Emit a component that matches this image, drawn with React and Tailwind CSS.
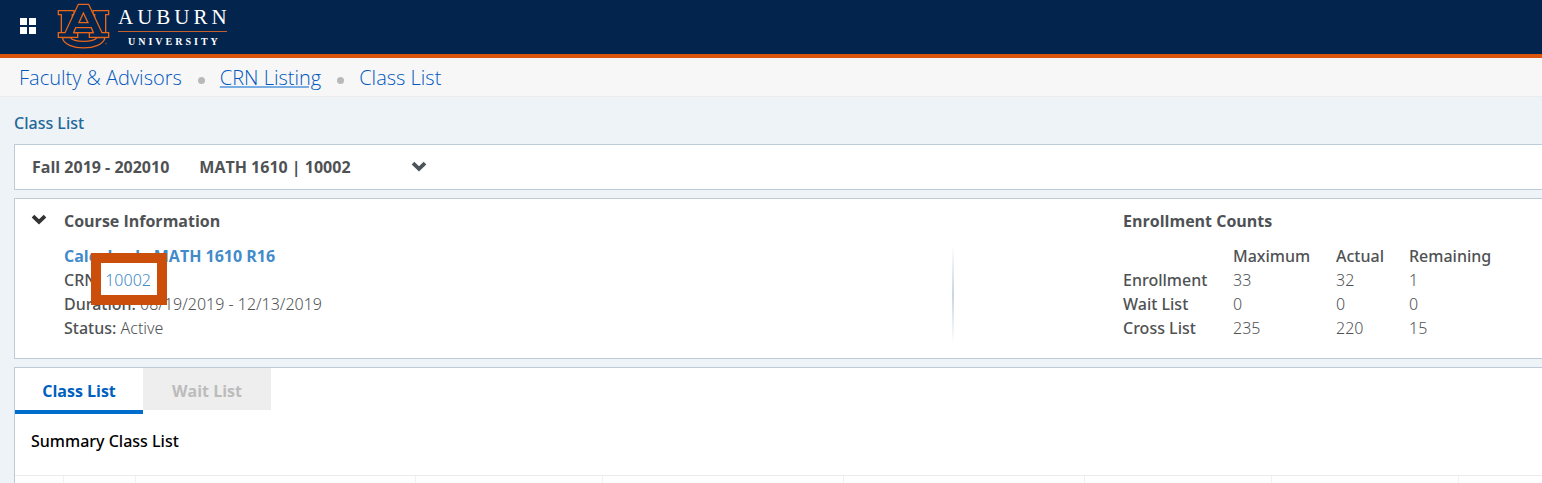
import { useState } from 'react';
import clsx from 'clsx';

const enrollment = [
  { label: 'Enrollment', maximum: 33, actual: 32, remaining: 1 },
  { label: 'Wait List', maximum: 0, actual: 0, remaining: 0 },
  { label: 'Cross List', maximum: 235, actual: 220, remaining: 15 },
];

const columnWidths = [
  'w-12',
  'w-[72px]',
  'w-[280px]',
  'w-[187px]',
  'w-[241px]',
  'w-[241px]',
  'w-[187px]',
  'w-[187px]',
];

function Chevron({ className }) {
  return (
    <svg viewBox="0 0 16 11" className={clsx('w-4 h-[11px]', className)}>
      <path
        d="M2 2.2 L8 7.8 L14 2.2"
        fill="none"
        stroke="currentColor"
        strokeWidth="3.8"
      />
    </svg>
  );
}

function AuburnMark() {
  return (
    <svg
      viewBox="171 8 159 141"
      className="w-[53px] h-[47px]"
      fill="#03244d"
      stroke="#e8651a"
      strokeWidth="4"
      strokeLinejoin="miter"
    >
      <path d="M187 112 C194 153 308 153 315 112 L291 112 C280 127 222 127 211 112 Z" />
      <path d="M175 31 H222 V43 H217 V97 H184 V43 H175 Z" />
      <path d="M326 31 H279 V43 H284 V97 H317 V43 H326 Z" />
      <path d="M235 12 H266 L306 97 H326 V111 H268 V97 H280 L274 82 H227 L221 97 H233 V111 H175 V97 H195 Z" />
      <path d="M221 97 H280" />
      <path d="M250 38 L264 67 H237 Z" />
      <circle cx="318" cy="130" r="1.5" strokeWidth="1.5" />
    </svg>
  );
}

function Header() {
  return (
    <header className="bg-[#03244d] border-b-4 border-[#dd550c] h-[58px] flex items-center pl-5 pb-0.5">
      <button
        type="button"
        aria-label="Menu"
        className="grid grid-cols-2 gap-0.5 text-white"
      >
        <span className="size-[7px] bg-current" />
        <span className="size-[7px] bg-current" />
        <span className="size-[7px] bg-current" />
        <span className="size-[7px] bg-current" />
      </button>
      <a href="#home" className="flex items-center ml-[21px] gap-2">
        <AuburnMark />
        <span className="flex flex-col font-['Liberation_Serif'] text-white">
          <span className="w-[109px] text-[21px] leading-7 tracking-[4px] border-b border-[#c4622f]">
            AUBURN
          </span>
          <span className="text-[10px] leading-4 font-bold tracking-[3px] pt-0.5 pl-2.5">
            UNIVERSITY
          </span>
        </span>
      </a>
    </header>
  );
}

function Breadcrumb() {
  return (
    <nav
      aria-label="Breadcrumb"
      className="bg-[#f7f7f7] border-b border-[#ececec] h-[39px] flex items-center pt-0.5 pl-[19px] text-xl leading-7 font-light text-[#0058bd]"
    >
      <a href="#faculty">Faculty &amp; Advisors</a>
      <span className="size-[7px] rounded-full bg-[#b9b9b9] ml-4 mr-[15px] mt-1" />
      <a
        href="#crn"
        className="underline decoration-[#7aaee2] decoration-2 underline-offset-1"
      >
        CRN Listing
      </a>
      <span className="size-[7px] rounded-full bg-[#b9b9b9] ml-4 mr-[15px] mt-1" />
      <a href="#class-list">Class List</a>
    </nav>
  );
}

function CourseInformation() {
  return (
    <section className="bg-white border-y border-l border-[#bdcbd8] grid grid-cols-[938fr_589fr] pt-2.5 pb-[18px]">
      <div className="flex items-start pl-4">
        <button
          type="button"
          aria-label="Collapse"
          className="text-[#333333] mt-[5px] mr-[17px]"
        >
          <Chevron />
        </button>
        <div>
          <h2 className="font-bold">Course Information</h2>
          <div className="mt-[11px] font-['Noto_Sans',sans-serif] font-light">
            <a
              href="#course"
              className="font-['Open_Sans',sans-serif] font-bold text-[#428bca]"
            >
              Calculus I - MATH 1610 R16
            </a>
            <p>
              <span className="font-medium">CRN:</span>{' '}
              <span className="relative">
                <a href="#10002" className="text-[#428bca]">
                  10002
                </a>
                <span className="absolute -left-3.5 -right-4 -top-4 -bottom-3.5 border-10 border-[#cb4f0b] pointer-events-none" />
              </span>
            </p>
            <p>
              <span className="font-medium">Duration:</span> 08/19/2019 -
              12/13/2019
            </p>
            <p>
              <span className="font-medium">Status:</span> Active
            </p>
          </div>
        </div>
      </div>

      <div className="flex">
        <div className="w-0.5 -ml-px mt-9 mb-[-4px] shrink-0 bg-linear-to-b from-white via-[#c9d6e4] to-white" />
        <div className="pl-[169px]">
          <h2 className="font-bold">Enrollment Counts</h2>
          <table className="mt-[11px] table-fixed w-[370px] text-left font-['Noto_Sans',sans-serif] font-light">
            <thead>
              <tr className="*:p-0 *:font-medium">
                <th className="w-[110px]" />
                <th className="w-[103px]">Maximum</th>
                <th className="w-[73px]">Actual</th>
                <th>Remaining</th>
              </tr>
            </thead>
            <tbody>
              {enrollment.map((row) => (
                <tr key={row.label}>
                  <th className="font-medium">{row.label}</th>
                  <td>{row.maximum}</td>
                  <td>{row.actual}</td>
                  <td>{row.remaining}</td>
                </tr>
              ))}
            </tbody>
          </table>
        </div>
      </div>
    </section>
  );
}

function ClassList() {
  const [tab, setTab] = useState('Class List');

  return (
    <section className="bg-white border-t border-l border-[#bdcbd8]">
      <div role="tablist" className="flex items-start h-[46px]">
        {['Class List', 'Wait List'].map((name) => (
          <button
            key={name}
            type="button"
            role="tab"
            aria-selected={tab === name}
            onClick={() => setTab(name)}
            className={clsx(
              'w-32 font-bold pt-[11px]',
              tab === name
                ? 'h-[46px] pb-[7px] border-b-4 border-[#006ccc] text-[#0060bf]'
                : 'h-[42px] pb-[7px] bg-[#eeeeee] text-[#bcbcbc]',
            )}
          >
            {name}
          </button>
        ))}
      </div>
      <h3 className="pl-4 pt-[15px] pb-[22px] font-['Noto_Sans',sans-serif] font-medium text-black">
        Summary {tab}
      </h3>
      <div className="overflow-hidden border-t border-[#ebebeb]">
        <table className="table-fixed w-full">
          <thead>
            <tr>
              {columnWidths.map((width, i) => (
                <th
                  key={i}
                  className={clsx('h-[7px] border-r border-[#f0f0f0]', width)}
                />
              ))}
              <th />
            </tr>
          </thead>
        </table>
      </div>
    </section>
  );
}

export default function App() {
  return (
    <div className="bg-[#eef3f7] font-['Open_Sans',sans-serif] text-base leading-6 text-[#4f5254]">
      <Header />
      <Breadcrumb />
      <main className="pl-3.5">
        <h1 className="pt-3.5 pb-[9px] font-['Noto_Sans',sans-serif] font-medium text-[#24689a]">
          Class List
        </h1>
        <div className="flex flex-col gap-2">
          <section className="bg-white border-y border-l border-[#bdcbd8] h-[46px] flex items-center pl-[17px] font-bold">
            <span>Fall 2019 - 202010</span>
            <div className="relative ml-[30px] w-[228px]">
              <select
                aria-label="Course"
                className="appearance-none w-full bg-transparent font-bold"
              >
                <option>MATH 1610 | 10002</option>
              </select>
              <Chevron className="absolute right-0 top-1.5 pointer-events-none text-[#4b545b]" />
            </div>
          </section>
          <CourseInformation />
          <ClassList />
        </div>
      </main>
    </div>
  );
}
